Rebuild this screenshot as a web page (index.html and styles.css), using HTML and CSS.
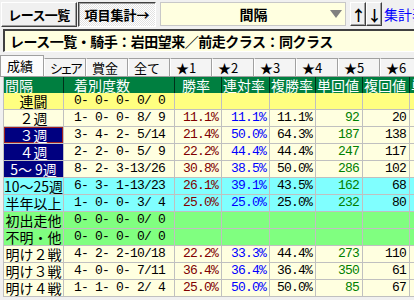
FILE: index.html
```html
<!DOCTYPE html>
<html lang="ja">
<head>
    <meta charset="UTF-8">
    <title>レース一覧・項目集計</title>
    <link rel="stylesheet" href="styles.css">
</head>
<body>

<div class="toolbar">
    <button class="btn btn-main">レース一覧</button>
    <button class="btn btn-on">項目集計→</button>
    <div class="combo">
        <span class="combo-text">間隔</span>
        <span class="combo-arrow"></span>
    </div>
    <div class="sort">
        <button class="btn btn-sort">↑</button>
        <button class="btn btn-sort">↓</button>
    </div>
    <span class="link">集計表示</span>
</div>

<div class="title">レース一覧・騎手：岩田望来／前走クラス：同クラス</div>

<div class="tabs">
    <div class="tab tab-on">成績</div>
    <div class="tab"><span class="narrow">シェア</span></div>
    <div class="tab">賞金</div>
    <div class="tab">全て</div>
    <div class="tab">★1</div>
    <div class="tab">★2</div>
    <div class="tab">★3</div>
    <div class="tab">★4</div>
    <div class="tab">★5</div>
    <div class="tab">★6</div>
</div>

<div class="sheet">
    <div class="head">
        <div>間隔</div>
        <div class="cnt">着別度数</div>
        <div class="ind">勝率</div>
        <div>連対率</div>
        <div>複勝率</div>
        <div>単回値</div>
        <div>複回値</div>
        <div>単勝</div>
    </div>
    <div class="body">
        <div class="row yellow">
            <div class="lbl">連闘</div><div class="num cnt">0- 0- 0- 0/ 0</div>
            <div></div><div></div><div></div><div></div><div></div><div></div>
        </div>
        <div class="row">
            <div class="lbl">２週</div><div class="num cnt">1- 0- 0- 8/ 9</div>
            <div class="num c-win">11.1%</div><div class="num c-ren">11.1%</div><div class="num">11.1%</div>
            <div class="num c-tan">92</div><div class="num">20</div><div></div>
        </div>
        <div class="row">
            <div class="lbl navy focus">３週</div><div class="num cnt">3- 4- 2- 5/14</div>
            <div class="num c-win">21.4%</div><div class="num c-ren">50.0%</div><div class="num">64.3%</div>
            <div class="num c-tan">187</div><div class="num">138</div><div></div>
        </div>
        <div class="row">
            <div class="lbl navy">４週</div><div class="num cnt">2- 2- 0- 5/ 9</div>
            <div class="num c-win">22.2%</div><div class="num c-ren">44.4%</div><div class="num">44.4%</div>
            <div class="num c-tan">247</div><div class="num">117</div><div></div>
        </div>
        <div class="row">
            <div class="lbl navy">5～ 9週</div><div class="num cnt">8- 2- 3-13/26</div>
            <div class="num c-win">30.8%</div><div class="num c-ren">38.5%</div><div class="num">50.0%</div>
            <div class="num c-tan">286</div><div class="num">102</div><div></div>
        </div>
        <div class="row cyan">
            <div class="lbl">10～25週</div><div class="num cnt">6- 3- 1-13/23</div>
            <div class="num c-win">26.1%</div><div class="num c-ren">39.1%</div><div class="num">43.5%</div>
            <div class="num c-tan">162</div><div class="num">68</div><div></div>
        </div>
        <div class="row cyan">
            <div class="lbl">半年以上</div><div class="num cnt">1- 0- 0- 3/ 4</div>
            <div class="num c-win">25.0%</div><div class="num c-ren">25.0%</div><div class="num">25.0%</div>
            <div class="num c-tan">232</div><div class="num">80</div><div></div>
        </div>
        <div class="row green">
            <div class="lbl">初出走他</div><div class="num cnt">0- 0- 0- 0/ 0</div>
            <div></div><div></div><div></div><div></div><div></div><div></div>
        </div>
        <div class="row green">
            <div class="lbl">不明・他</div><div class="num cnt">0- 0- 0- 0/ 0</div>
            <div></div><div></div><div></div><div></div><div></div><div></div>
        </div>
        <div class="row">
            <div class="lbl">明け２戦</div><div class="num cnt">4- 2- 2-10/18</div>
            <div class="num c-win">22.2%</div><div class="num c-ren">33.3%</div><div class="num">44.4%</div>
            <div class="num c-tan">273</div><div class="num">110</div><div></div>
        </div>
        <div class="row">
            <div class="lbl">明け３戦</div><div class="num cnt">4- 0- 0- 7/11</div>
            <div class="num c-win">36.4%</div><div class="num c-ren">36.4%</div><div class="num">36.4%</div>
            <div class="num c-tan">350</div><div class="num">61</div><div></div>
        </div>
        <div class="row">
            <div class="lbl">明け４戦</div><div class="num cnt">1- 1- 0- 2/ 4</div>
            <div class="num c-win">25.0%</div><div class="num c-ren">50.0%</div><div class="num">50.0%</div>
            <div class="num c-tan">85</div><div class="num">67</div><div></div>
        </div>
    </div>
</div>

</body>
</html>
```

FILE: styles.css
```css
body {
    margin: 0;
    width: 414px;
    height: 300px;
    overflow: hidden;
    background-color: #f0f0f0;
    font-family: "Noto Sans CJK JP", sans-serif;
    color: #000;
}

/* top bar */
.toolbar {
    display: flex;
    align-items: center;
    height: 28px;
    padding-left: 1px;
    white-space: nowrap;
    overflow: hidden;
}
.toolbar > * {
    flex: none;
}
.btn {
    font-family: "Noto Sans CJK JP", sans-serif;
    font-weight: bold;
    font-size: 13px;
    height: 25px;
    padding: 0;
    color: #000;
    background-color: #f0f0f0;
    border: 1px solid;
    border-color: #fff #404040 #404040 #fff;
    box-shadow: inset -1px -1px #a0a0a0;
}
.btn-main {
    width: 76px;
    letter-spacing: -0.6px;
}
.btn-on {
    width: 78px;
    margin-left: 1px;
    background: repeating-conic-gradient(#fff 0 25%, #e2e2e2 0 50%) 0 0 / 2px 2px;
    border-color: #404040 #fff #fff #404040;
    box-shadow: inset 1px 1px #a0a0a0;
}
.combo {
    display: flex;
    align-items: center;
    width: 186px;
    height: 24px;
    margin-left: 4px;
    box-sizing: border-box;
    background-color: #ffffe0;
    border: 1px solid #c8c8c8;
}
.combo-text {
    flex: 1;
    text-align: center;
    padding-left: 16px;
    font-weight: bold;
    font-size: 14px;
}
.combo-arrow {
    width: 0;
    height: 0;
    margin-right: 3px;
    border-left: 6px solid transparent;
    border-right: 6px solid transparent;
    border-top: 8px solid #808080;
}
.sort {
    display: flex;
    margin-left: 4px;
}
.btn-sort {
    width: 16px;
    height: 24px;
    font-size: 15px;
}
.link {
    margin-left: 2px;
    color: #0000ff;
    font-size: 14px;
}

/* title */
.title {
    margin: 1px 0 0 3px;
    height: 20px;
    padding-left: 5px;
    background-color: #ffffe0;
    border-style: solid;
    border-width: 2px 0 1px 2px;
    border-color: #404040 #fff #fff #404040;
    font-weight: bold;
    font-size: 14px;
    line-height: 20px;
    letter-spacing: -0.5px;
    white-space: nowrap;
}

/* tabs */
.tabs {
    display: flex;
    align-items: flex-end;
    height: 21px;
    margin-top: 3px;
    border-bottom: 1px solid #a0a0a0;
    white-space: nowrap;
    overflow: hidden;
}
.tab {
    flex: none;
    width: 42px;
    height: 18px;
    box-sizing: border-box;
    padding-left: 5px;
    background-color: #f4f4f4;
    border: 1px solid #a0a0a0;
    border-bottom: none;
    border-left-color: #fff;
    font-size: 13px;
    line-height: 17px;
}
.tab-on {
    width: 44px;
    height: 22px;
    margin-bottom: -1px;
    padding-left: 6px;
    background-color: #fcfcfc;
    border-left-color: #a0a0a0;
    line-height: 19px;
}
.narrow {
    letter-spacing: -3px;
}

/* sheet */
.sheet {
    padding-left: 3px;
    overflow-x: clip;
    overflow-y: visible;
}
.head,
.body {
    display: grid;
    grid-template-columns: 59px 110px 46px 47px 45px 46px 46px 46px;
    column-gap: 1px;
    border-left: 1px solid #c0c0c0;
}
.head {
    background-color: #00301a;
}
.head div {
    height: 16px;
    padding-left: 1px;
    background-color: #007f40;
    color: #fff;
    font-size: 14px;
    line-height: 16px;
    white-space: nowrap;
}
.head .cnt {
    padding-left: 10px;
}
.head .ind {
    padding-left: 7px;
}
.body {
    grid-auto-rows: 16px;
    row-gap: 1px;
    padding-bottom: 1px;
    background-color: #c0c0c0;
}
.row {
    display: contents;
}
.row > div {
    background-color: #ffffe0;
    line-height: 16px;
    white-space: pre;
}
.row.yellow > div {
    background-color: #ffff80;
}
.row.cyan > div {
    background-color: #80ffff;
}
.row.green > div {
    background-color: #80ff80;
}
.row > .navy {
    background-color: #000080;
    color: #fff;
}
.row > .focus {
    box-shadow: inset 0 0 0 1px #a02020;
}
.lbl {
    text-align: center;
    font-size: 14px;
}
.num {
    font-family: "Liberation Mono", monospace;
    font-size: 13px;
    letter-spacing: -0.8px;
    text-align: right;
    padding-right: 3px;
}
.num.cnt {
    text-align: left;
    padding-left: 10px;
    padding-right: 0;
}
.c-win {
    color: #800000;
}
.c-ren {
    color: #0000ff;
}
.c-tan {
    color: #008000;
}
```
